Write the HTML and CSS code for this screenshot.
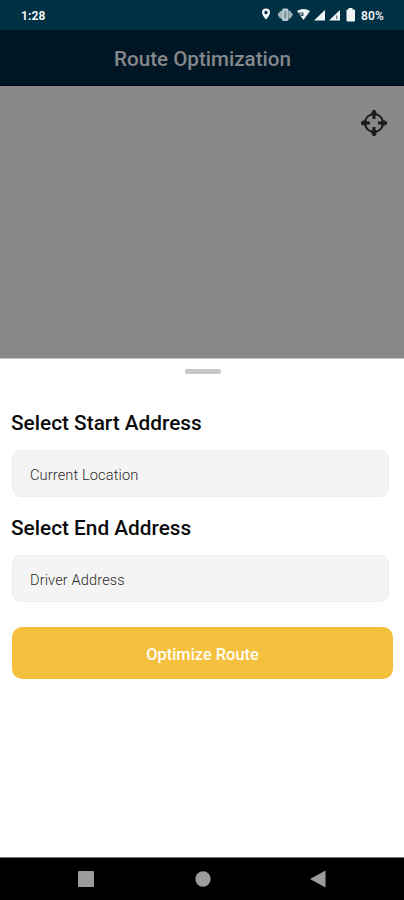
FILE: index.html
```html
<!DOCTYPE html>
<html lang="en">
<head>
<meta charset="utf-8">
<title>Route Optimization</title>
<link rel="stylesheet" href="styles.css">
</head>
<body>
<div class="phone">
  <div class="status">
    <span class="time">1:28</span>
    <svg class="status-icons" width="94" height="16" viewBox="0 0 94 16" fill="#f1f5f6">
      <path fill-rule="evenodd" d="M4 1.500a4 4 0 0 0-4 4c0 2.800 4 7 4 7s4-4.200 4-7a4 4 0 0 0-4-4zm0 2.300a1.700 1.700 0 1 1 0 3.400 1.700 1.700 0 0 1 0-3.400z"/>
      <g fill="#b9c8ce">
        <rect x="20" y="1.500" width="6.500" height="12.500" rx="1.500"/>
        <path d="M17.500 4H20v7.500h-2.500zM26.500 4H29v7.500h-2.500zM16 6h1.500v3.500H16zM29 6h1.500v3.500H29z" opacity=".85"/>
      </g>
      <path d="M22 4h2.500v7.500H22z" fill="#7f98a3"/>
      <path d="M35 4q6.500-4 13 0l-6.500 9z"/>
      <path d="M36.500 5.500h5v3.500h-2.500z" fill="#315363"/>
      <path d="M38 6.500h2.500l-1.300 1.500z"/>
      <path d="M52 13.500 63 3V13.500z"/>
      <path d="M67 13.500 78 3V13.500z"/>
      <path d="M74.300 8.500h1v3.500h-1z" fill="#315363"/>
      <path d="M86.500 1h4v1.500H92q1 0 1 1V13.500q0 1-1 1h-6.500q-1 0-1-1V3.500q0-1 1-1h1z"/>
    </svg>
    <span class="percent">80%</span>
  </div>
  <header class="header">Route Optimization</header>
  <div class="map">
    <svg class="locate" width="28" height="28" viewBox="0 0 28 28" fill="none" stroke="#1b1b1b">
      <circle cx="14" cy="14" r="9" stroke-width="2"/>
      <path d="M14 1v9M14 18v9M1 14h9M18 14h9" stroke-width="3"/>
      <path d="M14 2.500v4.500M14 21v4.500M2.500 14h4.500M21 14h4.500" stroke-width="4.800"/>
    </svg>
  </div>
  <main class="sheet">
    <div class="handle"></div>
    <h2 class="label start">Select Start Address</h2>
    <div class="field">Current Location</div>
    <h2 class="label end">Select End Address</h2>
    <div class="field">Driver Address</div>
    <button class="button">Optimize Route</button>
  </main>
  <nav class="nav">
    <svg width="404" height="42" viewBox="0 0 404 42" fill="#9c9c9c">
      <rect x="78" y="13" width="16" height="16" rx="1"/>
      <circle cx="203" cy="21" r="7.700"/>
      <path d="M310 21l15.500-8.500v17z"/>
    </svg>
  </nav>
</div>
</body>
</html>
```

FILE: styles.css
```css
* { box-sizing: border-box; }
body { margin: 0; font-family: Roboto, sans-serif; background: #fff; }
.phone { width: 404px; height: 900px; display: flex; flex-direction: column; overflow: hidden; }
.status { height: 30px; flex: none; background: #003044; color: #f1f5f6; display: flex; align-items: center; padding: 0 19px 0 21px; font-size: 12px; font-weight: 700; }
.time { width: 241px; padding-top: 1px; letter-spacing: 0.1px; }
.status-icons { flex: none; }
.percent { margin-left: 5px; padding-top: 1px; font-size: 12px; font-weight: 600; letter-spacing: 0.1px; }
.header { height: 56px; flex: none; background: #001625; border-bottom: 1px solid #000a12; color: #85888b; display: flex; align-items: center; justify-content: center; padding: 3px 0 0 1px; font-size: 20.6px; font-weight: 500; }
.map { height: 272px; flex: none; background: #888; display: flex; justify-content: flex-end; padding: 23px 16px 0 0; }
.sheet { height: 499px; flex: none; background: #fff; border-top: 1px solid #c4c4c4; padding: 10px 11px 0 12px; display: flex; flex-direction: column; }
.handle { width: 36px; height: 5px; flex: none; border-radius: 2px; background: #c8c8c8; margin-left: 173px; }
.label { margin: 0 0 0 -1px; color: #0b0b0b; font-size: 20.8px; font-weight: 500; line-height: 24px; }
.start { margin-top: 37px; }
.end { margin-top: 19px; }
.field { width: 377px; height: 47px; flex: none; margin-top: 15px; background: #f4f4f4; border: 1px solid #ededed; border-radius: 9px; display: flex; align-items: center; padding: 2px 17px 0; color: #2b2b2b; font-size: 14.6px; font-weight: 300; letter-spacing: 0.12px; }
.button { width: 381px; height: 52px; flex: none; margin: 25px 0 0; padding: 2px 0 0; border: 0; border-radius: 10px; background: #f5c03d; color: #fffdf5; font-family: inherit; font-size: 16.4px; font-weight: 500; }
.nav { height: 43px; flex: none; background: #000; border-top: 1px solid #777; }
.nav svg { display: block; }
```
